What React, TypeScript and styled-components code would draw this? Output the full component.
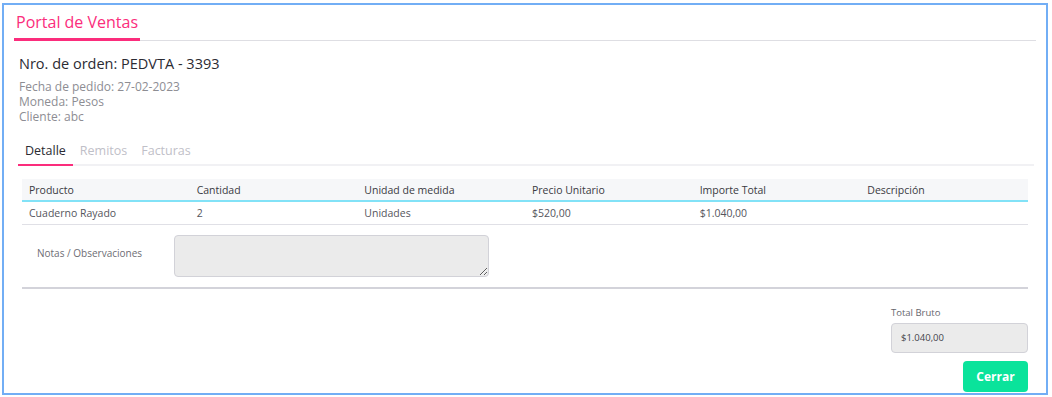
import styled, { createGlobalStyle } from "styled-components";

const GlobalStyle = createGlobalStyle`
  html, body {
    margin: 0;
    padding: 0;
    background: #ffffff;
  }
  body {
    font-family: "Open Sans", "Noto Sans", sans-serif;
    color: #333;
  }
  * {
    box-sizing: border-box;
  }
`;

const Frame = styled.div`
  margin: 3px 4px 2px 2px;
  height: 392px;
  border: 2px solid #72aef5;
  padding: 0 10px;
  display: flex;
  flex-direction: column;
`;

const TitleBar = styled.div`
  display: flex;
  border-bottom: 1px solid #dedee3;
  margin-top: 6px;
`;

const TitleTab = styled.div`
  font-size: 16px;
  color: #fb2d7c;
  padding: 0 2px 5px 2px;
  border-bottom: 3px solid #fb2d7c;
  margin-bottom: -1px;
  line-height: 22px;
`;

const Info = styled.div`
  margin: 13px 0 0 5px;
`;

const OrderTitle = styled.div`
  font-size: 14.5px;
  color: #2b2b33;
  line-height: 20px;
  margin-bottom: 5px;
`;

const InfoLine = styled.div`
  font-size: 12px;
  color: #8d8d93;
  line-height: 15px;
`;

const Tabs = styled.div`
  display: flex;
  margin: 15px 2px 0 4px;
  border-bottom: 2px solid #f1f1f4;
`;

const Tab = styled.div<{ $active?: boolean }>`
  font-size: 12.5px;
  line-height: 16px;
  padding: 4px 7px 5px 7px;
  color: ${(p) => (p.$active ? "#2b2b33" : "#bfc0c8")};
  border-bottom: 2px solid ${(p) => (p.$active ? "#fb2d7c" : "transparent")};
  margin-bottom: -2px;
`;

const Table = styled.table`
  margin: 13px 8px 0 8px;
  width: calc(100% - 16px);
  border-collapse: collapse;
  table-layout: fixed;
  font-size: 10.5px;
`;

const HeadCell = styled.th`
  text-align: left;
  font-weight: 400;
  color: #3a3a42;
  background: #f6f7f9;
  height: 22px;
  padding: 0 7px;
  border-bottom: 2px solid #82e2f7;
`;

const Cell = styled.td`
  color: #55555d;
  height: 23px;
  padding: 0 7px;
  border-bottom: 1px solid #e0e0e6;
`;

const NotesRow = styled.div`
  display: flex;
  align-items: flex-start;
  margin: 10px 0 0 8px;
  padding-left: 15px;
`;

const NotesLabel = styled.div`
  width: 137px;
  font-size: 10px;
  color: #6d6d74;
  padding-top: 11px;
`;

const NotesInput = styled.textarea`
  width: 315px;
  height: 42px;
  background: #ebebeb;
  border: 1px solid #d2d2d8;
  border-radius: 4px;
  resize: vertical;
  font-family: inherit;
  margin: 0;
`;

const Divider = styled.div`
  margin: 10px 8px 0 8px;
  border-top: 2px solid #d3d3da;
`;

const Totals = styled.div`
  display: flex;
  flex-direction: column;
  align-items: flex-end;
  margin: 17px 8px 0 0;
`;

const TotalBox = styled.div`
  width: 137px;
`;

const TotalLabel = styled.div`
  font-size: 9.5px;
  color: #66666d;
  margin-bottom: 4px;
`;

const TotalInput = styled.div`
  height: 30px;
  background: #ebebeb;
  border: 1px solid #d2d2d8;
  border-radius: 4px;
  font-size: 9.5px;
  color: #44444b;
  display: flex;
  align-items: center;
  padding-left: 9px;
`;

const CloseButton = styled.button`
  margin-top: 8px;
  width: 65px;
  height: 31px;
  background: #0ae39b;
  border: none;
  border-radius: 4px;
  color: #ffffff;
  font-family: inherit;
  font-weight: 700;
  font-size: 12px;
`;

const columns = [
  "Producto",
  "Cantidad",
  "Unidad de medida",
  "Precio Unitario",
  "Importe Total",
  "Descripción",
];

const rows = [
  ["Cuaderno Rayado", "2", "Unidades", "$520,00", "$1.040,00", ""],
];

const App = () => {
  return (
    <>
      <GlobalStyle />
      <Frame>
        <TitleBar>
          <TitleTab>Portal de Ventas</TitleTab>
        </TitleBar>
        <Info>
          <OrderTitle>Nro. de orden: PEDVTA - 3393</OrderTitle>
          <InfoLine>Fecha de pedido: 27-02-2023</InfoLine>
          <InfoLine>Moneda: Pesos</InfoLine>
          <InfoLine>Cliente: abc</InfoLine>
        </Info>
        <Tabs>
          <Tab $active>Detalle</Tab>
          <Tab>Remitos</Tab>
          <Tab>Facturas</Tab>
        </Tabs>
        <Table>
          <thead>
            <tr>
              {columns.map((c) => (
                <HeadCell key={c}>{c}</HeadCell>
              ))}
            </tr>
          </thead>
          <tbody>
            {rows.map((r, i) => (
              <tr key={i}>
                {r.map((v, j) => (
                  <Cell key={j}>{v}</Cell>
                ))}
              </tr>
            ))}
          </tbody>
        </Table>
        <NotesRow>
          <NotesLabel>Notas / Observaciones</NotesLabel>
          <NotesInput disabled />
        </NotesRow>
        <Divider />
        <Totals>
          <TotalBox>
            <TotalLabel>Total Bruto</TotalLabel>
            <TotalInput>$1.040,00</TotalInput>
          </TotalBox>
          <CloseButton>Cerrar</CloseButton>
        </Totals>
      </Frame>
    </>
  );
};

export default App;
